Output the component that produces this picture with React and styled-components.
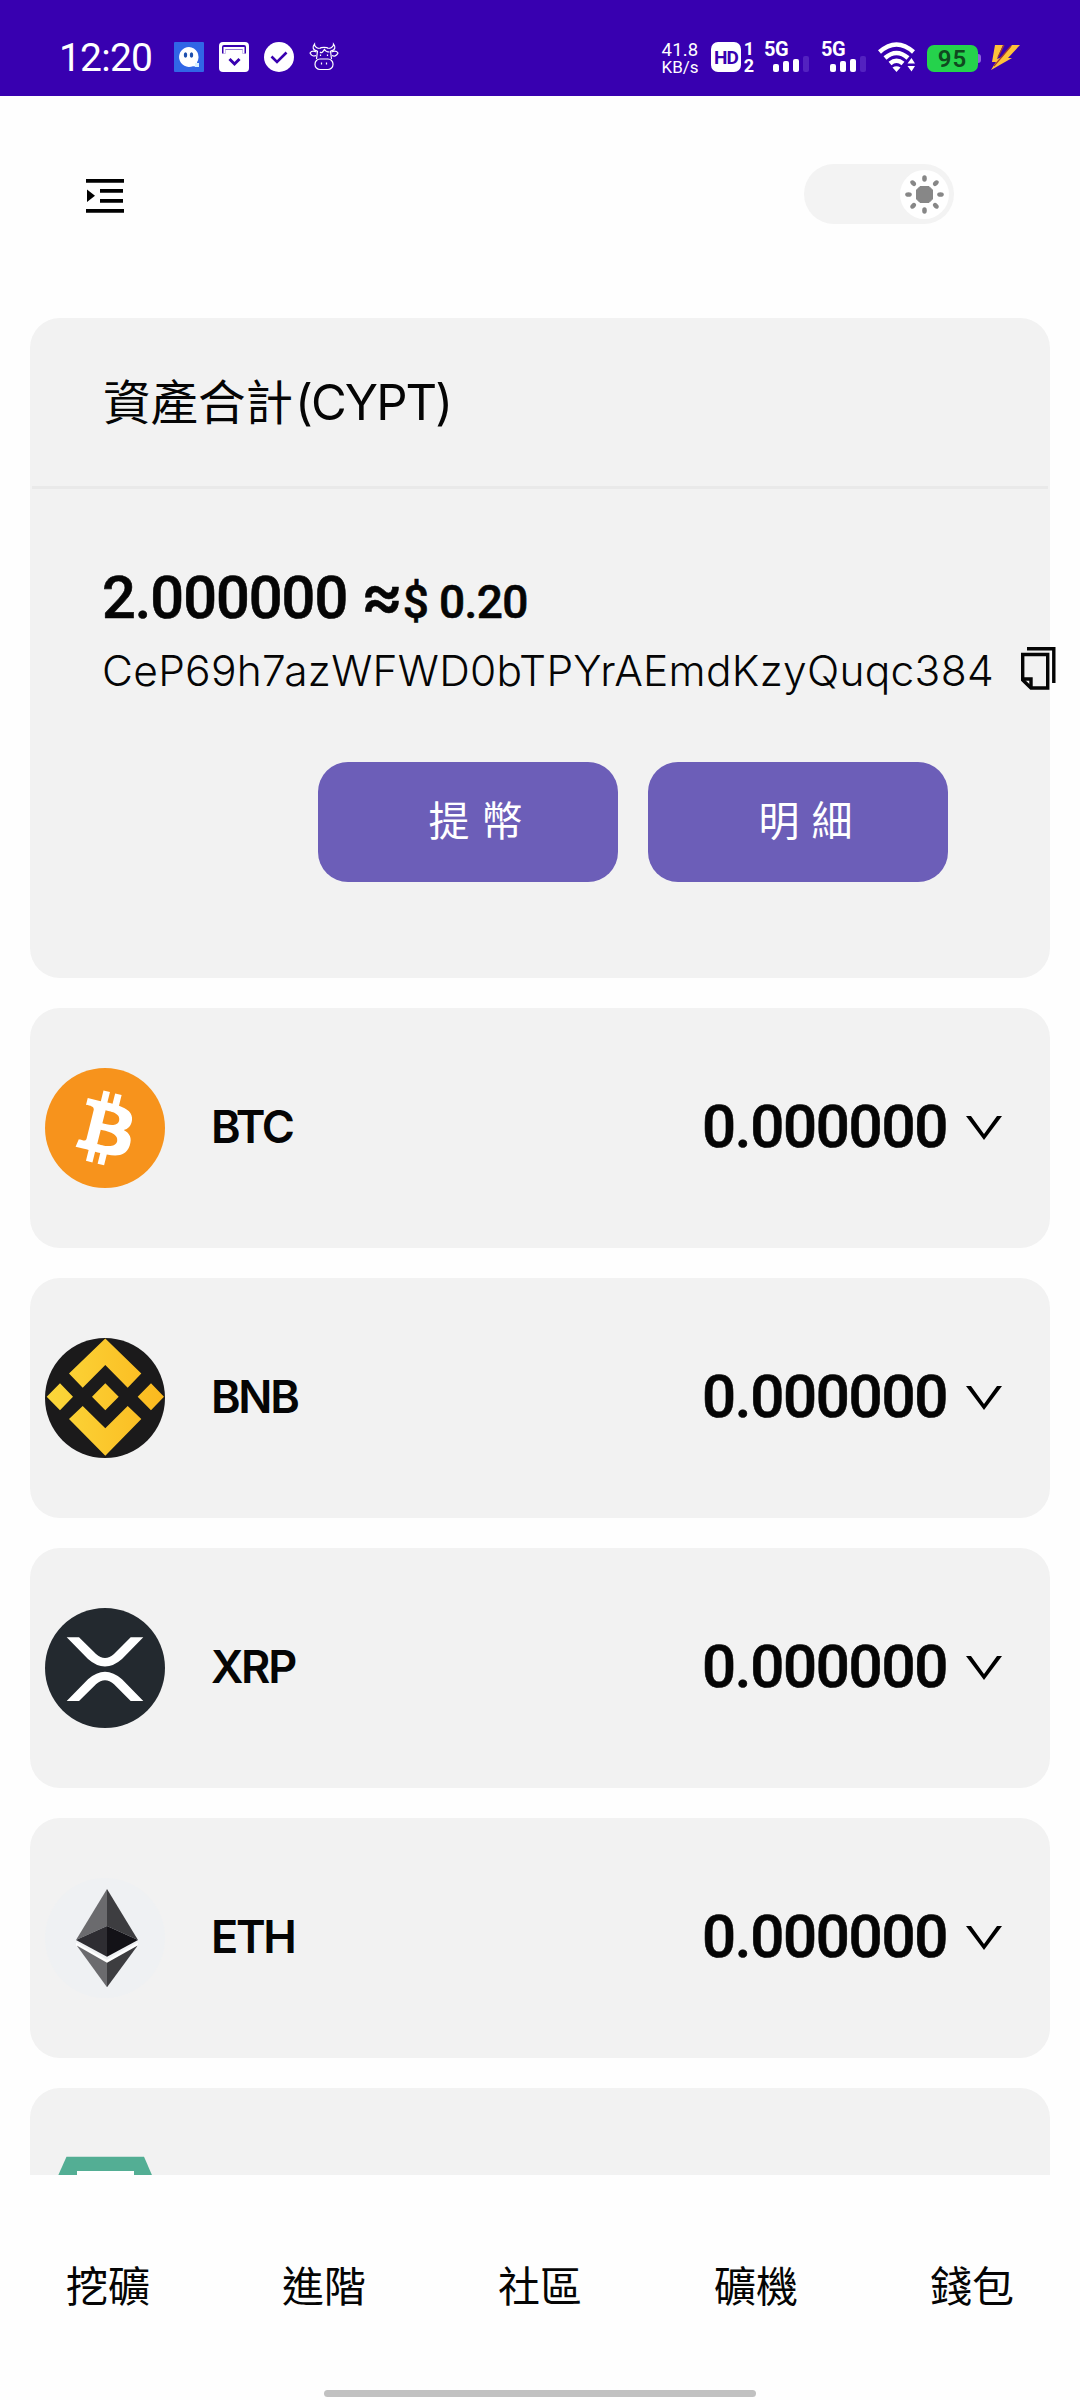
import React from 'react';
import styled, { createGlobalStyle } from 'styled-components';

const GlobalStyle = createGlobalStyle`
  * {
    box-sizing: border-box;
  }

  body {
    margin: 0;
    background: #fefefe;
    color: #050505;
    font-family: Inter, 'Noto Sans CJK TC', sans-serif;
  }

  svg {
    display: block;
    flex: none;
  }
`;

const Screen = styled.div`
  display: flex;
  flex-direction: column;
  width: 1080px;
  height: 2400px;
  overflow: hidden;
`;

/* status bar */

const StatusBar = styled.header`
  display: flex;
  justify-content: space-between;
  flex: none;
  height: 96px;
  padding: 42px 59px 0 59px;
  background: #3800b0;
  color: #fff;
`;

const StatusGroup = styled.div`
  display: flex;
  gap: ${(props) => props.$gap || 0}px;
  height: 30px;
`;

const Clock = styled.span`
  width: 100px;
  font: 450 39px/32px Roboto, sans-serif;
  letter-spacing: -0.8px;
  white-space: nowrap;
`;

const NetSpeed = styled.div`
  width: 38px;
  margin-right: 12px;
  font: 450 17px/17px Roboto, sans-serif;
  text-align: center;
  white-space: nowrap;

  span {
    display: block;
  }

  span:first-child {
    font-size: 18.5px;
    letter-spacing: 0.2px;
  }
`;

const HdBadge = styled.span`
  width: 30px;
  height: 30px;
  border-radius: 7px;
  background: #fff;
  color: #3800b0;
  font: 700 19px/31px Roboto, sans-serif;
  letter-spacing: -0.8px;
  text-align: center;
`;

const SimNumbers = styled.div`
  width: 14px;
  height: 34px;
  margin: -2px 8px 0 1px;
  font: 700 18px/17px Roboto, sans-serif;
  text-align: center;

  span {
    display: block;
  }
`;

const Signal = styled.div`
  display: flex;
  flex-direction: column;
  width: 57px;
  font: 700 20px/15px Roboto, sans-serif;
  letter-spacing: -0.5px;
`;

const Bars = styled.div`
  display: flex;
  align-items: flex-end;
  gap: 4px;
  height: 16px;
  margin: -1px 0 0 9px;
`;

const Bar = styled.i`
  width: 6px;
  height: ${(props) => props.$height}px;
  border-radius: 2px;
  background: ${(props) => (props.$dim ? '#5322c0' : '#fff')};
`;

const Battery = styled.div`
  display: flex;
  align-items: center;
  margin: 3px 9px 0 12px;
  height: 27px;

  &::after {
    content: '';
    width: 3px;
    height: 9px;
    border-radius: 0 3px 3px 0;
    background: #8d63dc;
  }
`;

const BatteryLevel = styled.span`
  width: 51px;
  height: 27px;
  border-radius: 7px;
  background: #25d24c;
  color: #10491f;
  font: 600 24px/28px Roboto, sans-serif;
  letter-spacing: 1px;
  text-align: center;
`;

/* top bar */

const TopBar = styled.div`
  display: flex;
  flex: none;
  justify-content: space-between;
  align-items: flex-start;
  height: 222px;
  padding: 68px 126px 0 86px;
`;

const MenuButton = styled.button`
  margin-top: 15px;
  padding: 0;
  border: 0;
  background: none;
`;

const Toggle = styled.div`
  display: flex;
  justify-content: flex-end;
  width: 150px;
  height: 60px;
  padding: 6px 5px;
  border-radius: 30px;
  background: #f3f3f3;
`;

const Knob = styled.div`
  width: 49px;
  height: 49px;
  border-radius: 50%;
  background: #fff;
`;

/* content */

const Content = styled.main`
  display: flex;
  flex: 1;
  flex-direction: column;
  gap: 30px;
  min-height: 0;
  padding: 0 30px;
  overflow: hidden;
`;

const Card = styled.section`
  flex: none;
  border-radius: 30px;
  background: #f2f2f2;
`;

const AssetCard = styled(Card)`
  height: 660px;
`;

const AssetTitle = styled.h1`
  height: 171px;
  margin: 0 2px;
  padding: 52px 0 0 71px;
  border-bottom: 3px solid #e9e9e9;
  font: 400 47.5px/60px 'Noto Sans CJK TC', sans-serif;

  span {
    margin-left: 2px;
    font-family: Inter, sans-serif;
    font-size: 49px;
    line-height: 1;
    letter-spacing: -1.9px;
  }
`;

const Balance = styled.div`
  display: flex;
  align-items: baseline;
  height: 80px;
  margin-top: 69px;
  padding-left: 72px;
  font: 500 59.5px/80px Roboto, sans-serif;
  letter-spacing: -1px;
  white-space: pre;
  -webkit-text-stroke: 0.6px #050505;
`;

const Approx = styled.span`
  margin-left: 13px;
  font: 500 65px/60px Inter, sans-serif;
  letter-spacing: -1px;
`;

const Fiat = styled.span`
  font-size: 46px;
  letter-spacing: -0.6px;
`;

const AddressRow = styled.div`
  display: flex;
  align-items: center;
  height: 60px;
  padding-left: 72px;
  white-space: nowrap;
`;

const Address = styled.span`
  width: 919px;
  flex: none;
  margin-top: 6px;
  font: 350 42.5px/60px Inter, sans-serif;
  letter-spacing: 0.28px;
`;

const Actions = styled.div`
  display: flex;
  justify-content: flex-end;
  gap: 30px;
  margin-top: 64px;
  padding-right: 102px;
`;

const ActionButton = styled.button`
  width: 300px;
  height: 120px;
  padding: 0 0 8px 15px;
  border: 0;
  border-radius: 30px;
  background: #6c5eb8;
  color: #fff;
  font: 400 41px/60px 'Noto Sans CJK TC', sans-serif;
  word-spacing: 3px;
`;

const CoinCard = styled(Card)`
  display: flex;
  align-items: center;
  height: 240px;
  padding: 0 48px 0 15px;
`;

const CoinName = styled.span`
  flex: 1;
  margin: -2px 0 0 46px;
  font: 600 45px/60px Inter, sans-serif;
  letter-spacing: -2.3px;
`;

const CoinAmount = styled.span`
  margin: -2px 19px 0 0;
  font: 500 60px/80px Roboto, sans-serif;
  letter-spacing: -1.3px;
  -webkit-text-stroke: 0.6px #050505;
`;

/* bottom navigation */

const BottomNav = styled.nav`
  display: flex;
  flex: none;
  flex-direction: column;
  align-items: center;
  justify-content: space-between;
  height: 225px;
  padding: 79px 0 3px;
`;

const NavItems = styled.div`
  display: grid;
  grid-template-columns: repeat(5, 1fr);
  width: 100%;
`;

const NavItem = styled.a`
  font: 400 42px/60px 'Noto Sans CJK TC', sans-serif;
  text-align: center;
`;

const HomeHandle = styled.div`
  width: 432px;
  height: 7px;
  border-radius: 4px;
  background: #c1c1c1;
`;

/* icons */

const ChatIcon = () => (
  <svg width="30" height="30" viewBox="0 0 30 30">
    <rect width="30" height="30" rx="1" fill="#3166e6" />
    <path d="M15 5a10 10 0 1 0 4 19.2l5 .6-1-4.500A10 10 0 0 0 15 5z" fill="#fff" />
    <path d="M21 21h4v4h-4z" fill="#d9f1ff" />
    <ellipse cx="11.500" cy="13" rx="1.700" ry="2.800" fill="#1d4fae" />
    <ellipse cx="17.500" cy="13" rx="1.700" ry="2.800" fill="#1d4fae" />
  </svg>
);

const InboxIcon = () => (
  <svg width="30" height="30" viewBox="0 0 30 30">
    <rect width="30" height="30" rx="4" fill="#fff" />
    <path d="M3 11.500V5a2 2 0 0 1 2-2h20a2 2 0 0 1 2 2v6.500h-3.500V7.500h-17v4z" fill="#3800b0" />
    <path d="M5.500 11.500V6h19v5.500" fill="none" stroke="#fff" strokeWidth="2" />
    <path d="M10.500 17l5 5 5-5" fill="none" stroke="#3800b0" strokeWidth="3" />
  </svg>
);

const CheckIcon = () => (
  <svg width="30" height="30" viewBox="0 0 30 30">
    <circle cx="15" cy="15" r="15" fill="#fff" />
    <path d="M7.500 14.500l5.500 5.500L22.500 10.500" fill="none" stroke="#3800b0" strokeWidth="2.600" />
  </svg>
);

const CowIcon = () => (
  <svg width="30" height="30" viewBox="0 0 30 30" fill="none" stroke="#fff" strokeWidth="1.200">
    <path d="M8.500 9C3 8 3.500 4.500 5.500 2c0 3 2 4 5 4.500M21.500 9c5.500-1 5-4.500 3-7 0 3-2 4-5 4.500" />
    <path d="M7.500 10C4 8.500 2 9.500 1 11c1.500 3 4 3.500 6 2.500M22.500 10c3.500-1.500 5.500-.5 6.500 1-1.500 3-4 3.500-6 2.500" />
    <path d="M10.500 6.500C12 5 18 5 19.500 6.500M8.500 9l-1 8M21.500 9l1 8M11 10c2 2 3-1 4.500-2.500 1 2 3 2.500 5 2.500" />
    <rect x="6" y="17" width="18" height="10.500" rx="5" />
    <path d="M12.500 20.500v2M17.500 20.500v2M11.500 12.500v1.500M18.500 12.500v1.500" />
  </svg>
);

const WifiIcon = () => (
  <svg width="37" height="30" viewBox="0 0 37 30" fill="none" stroke="#fff">
    <path d="M1.500 10Q18.500-5 35.500 10" strokeWidth="4.500" />
    <path d="M7 16Q18.500 6 30 16" strokeWidth="4.500" />
    <path d="M12 21.500Q18.500 16 25 21.500" strokeWidth="4.500" />
    <path d="M14.500 25.500q4-2.500 8 0l-4 4.500z" fill="#fff" stroke="none" />
    <path d="M29.500 21.500l4-5.500 3.500 5.500zM29.500 24l4 5.500 3.500-5.500z" fill="#fff" stroke="none" />
  </svg>
);

const ChargeIcon = () => (
  <svg width="31" height="30" viewBox="0 0 31 30">
    <path d="M5 3h8L7 17l5-2L22 3h8L18 16h4L1 28l5-8H2z" fill="#ffc239" />
    <path d="M14 3L8 15M21 4L4 24" stroke="#a33a32" strokeWidth="1.200" />
  </svg>
);

const MenuIcon = () => (
  <svg width="38" height="34" viewBox="0 0 38 34">
    <path d="M0 0h38v3.700H0zM14 10h23v3.700H14zM14 20h23v3.700H14zM0 30h38v3.700H0zM1 10.500v12.500l8-6.200z" />
  </svg>
);

const SunIcon = () => (
  <svg width="49" height="49" viewBox="-24.5 -24.5 49 49" fill="#878787">
    <path d="M-4.500-8h9l3.500 3.500v9l-3.500 3.500h-9l-3.500-3.500v-9z" stroke="#878787" strokeLinejoin="round" />
    {[0, 45, 90, 135, 180, 225, 270, 315].map((angle) => (
      <ellipse key={angle} cy="-16" rx="2.300" ry="3.300" transform={`rotate(${angle})`} />
    ))}
  </svg>
);

const CopyIcon = () => (
  <svg width="35" height="43" viewBox="0 0 35 43" fill="none" stroke="#050505" strokeWidth="3.400">
    <path d="M6 1.700h26.800V36" />
    <path d="M1.700 7.500h25v33.500H10L1.700 33z" />
    <path d="M1.700 32h8.300v9" />
  </svg>
);

const ChevronIcon = () => (
  <svg width="36" height="24" viewBox="0 0 36 24">
    <path d="M0 0h5L18 18 31 0H36L18 24z" />
  </svg>
);

const BtcLogo = () => (
  <svg width="120" height="120" viewBox="0 0 32 32">
    <circle cx="16" cy="16" r="16" fill="#f7931c" />
    <path
      fill="#fff"
      fillRule="evenodd"
      d="M23.189 14.020c.314-2.096-1.283-3.223-3.465-3.975l.708-2.840-1.728-.430-.690 2.765c-.454-.114-.920-.220-1.385-.326l.695-2.783L15.596 6l-.708 2.839c-.376-.086-.746-.170-1.104-.260l.002-.009-2.384-.595-.460 1.846s1.283.294 1.256.312c.700.175.826.638.805 1.006l-.806 3.235c.048.012.110.030.180.057l-.183-.045-1.130 4.532c-.086.212-.303.531-.793.410.018.025-1.256-.313-1.256-.313l-.858 1.978 2.250.561c.418.105.828.215 1.231.318l-.715 2.872 1.727.430.708-2.840c.472.127.930.245 1.378.357l-.706 2.828 1.728.430.715-2.866c2.948.558 5.164.333 6.097-2.333.752-2.146-.037-3.385-1.588-4.192 1.130-.260 1.980-1.003 2.207-2.538zm-3.950 5.538c-.533 2.147-4.148.986-5.320.695l.950-3.805c1.172.293 4.929.872 4.370 3.110zm.535-5.569c-.487 1.953-3.495.960-4.470.717l.860-3.450c.975.243 4.118.696 3.610 2.733z"
    />
  </svg>
);

const BnbLogo = () => (
  <svg width="120" height="120" viewBox="0 0 120 120">
    <defs>
      <linearGradient id="bnbGold" x1="0" y1="0" x2="1" y2="0">
        <stop offset="0" stopColor="#fbd73a" />
        <stop offset="1" stopColor="#fbb91f" />
      </linearGradient>
    </defs>
    <circle cx="60" cy="60" r="60" fill="#1b1a1b" />
    <path
      fill="url(#bnbGold)"
      d="M60.300.500l36 35-13.600 14.200L60.300 27 37.700 49.700 24 35.500zM60.300 45.300l13.400 13.400-13.400 13.600L47 58.700zM15 45.300l13 13.400-13 13.600L1.700 58.700zM106 45.300l13 13.400-13 13.600-13.300-13.600zM37.700 68l22.600 22.300L82.700 68l13.600 13-36 36.700L24 81z"
    />
  </svg>
);

const XrpLogo = () => (
  <svg width="120" height="120" viewBox="0 0 120 120">
    <circle cx="60" cy="60" r="60" fill="#23292f" />
    <path
      fill="#fff"
      d="M21.700 29.300H34L51 46Q60 54 69 46L85.700 29.300H98.300L77 51Q60 66 43 51ZM21.700 93H34L51 76.300Q60 68.300 69 76.300L85.700 93H98.300L77 71.300Q60 56.300 43 71.300Z"
    />
  </svg>
);

const EthLogo = () => (
  <svg width="120" height="120" viewBox="0 0 120 120">
    <circle cx="60" cy="60" r="60" fill="#eff1f3" />
    <path d="M31 64.500L62 82 93 64.500V68L62 86 31 68z" fill="#fff" />
    <path d="M62 11v37L31 62z" fill="#6b6b6e" />
    <path d="M62 11v37l31 14z" fill="#3d3d40" />
    <path d="M62 48v30.700L31 62z" fill="#2e2d32" />
    <path d="M62 48v30.700L93 62z" fill="#131217" />
    <path d="M31.700 67.500L62 84.700v24.600z" fill="#6b6b6e" />
    <path d="M92.700 67.500L62 84.700v24.600z" fill="#3d3d40" />
  </svg>
);

const UsdtLogo = () => (
  <svg width="120" height="120" viewBox="0 0 120 120">
    <path d="M21.500 8.700H99L120 57 60 112 0 57z" fill="#53ae94" />
    <path d="M32 23h57v14H68v10c18 1 30 4 30 8s-12 7-30 8v30H53V63c-18-1-30-4-30-8s12-7 30-8V37H32z" fill="#fff" />
  </svg>
);

const coins = [
  { name: 'BTC', amount: '0.000000', Logo: BtcLogo },
  { name: 'BNB', amount: '0.000000', Logo: BnbLogo },
  { name: 'XRP', amount: '0.000000', Logo: XrpLogo },
  { name: 'ETH', amount: '0.000000', Logo: EthLogo },
];

const tabs = ['挖礦', '進階', '社區', '礦機', '錢包'];

function SignalStrength() {
  return (
    <Signal>
      5G
      <Bars>
        <Bar $height={8} />
        <Bar $height={11} />
        <Bar $height={13} />
        <Bar $height={16} $dim />
      </Bars>
    </Signal>
  );
}

function CoinRow({ coin }) {
  const { name, amount, Logo } = coin;

  return (
    <CoinCard>
      <Logo />
      <CoinName>{name}</CoinName>
      <CoinAmount>{amount}</CoinAmount>
      <ChevronIcon />
    </CoinCard>
  );
}

function App() {
  return (
    <Screen>
      <GlobalStyle />
      <StatusBar>
        <StatusGroup $gap={15}>
          <Clock>12:20</Clock>
          <ChatIcon />
          <InboxIcon />
          <CheckIcon />
          <CowIcon />
        </StatusGroup>
        <StatusGroup>
          <NetSpeed>
            <span>41.8</span>
            <span>KB/s</span>
          </NetSpeed>
          <HdBadge>HD</HdBadge>
          <SimNumbers>
            <span>1</span>
            <span>2</span>
          </SimNumbers>
          <SignalStrength />
          <SignalStrength />
          <WifiIcon />
          <Battery>
            <BatteryLevel>95</BatteryLevel>
          </Battery>
          <ChargeIcon />
        </StatusGroup>
      </StatusBar>

      <TopBar>
        <MenuButton type="button" aria-label="menu">
          <MenuIcon />
        </MenuButton>
        <Toggle>
          <Knob>
            <SunIcon />
          </Knob>
        </Toggle>
      </TopBar>

      <Content>
        <AssetCard>
          <AssetTitle>
            資產合計
            <span>(CYPT)</span>
          </AssetTitle>
          <Balance>
            2.000000
            <Approx>≈</Approx>
            <Fiat>$ 0.20</Fiat>
          </Balance>
          <AddressRow>
            <Address>CeP69h7azWFWD0bTPYrAEmdKzyQuqc384</Address>
            <CopyIcon />
          </AddressRow>
          <Actions>
            <ActionButton type="button">提 幣</ActionButton>
            <ActionButton type="button">明 細</ActionButton>
          </Actions>
        </AssetCard>

        {coins.map((coin) => (
          <CoinRow key={coin.name} coin={coin} />
        ))}
        <CoinCard>
          <UsdtLogo />
        </CoinCard>
      </Content>

      <BottomNav>
        <NavItems>
          {tabs.map((tab) => (
            <NavItem key={tab}>{tab}</NavItem>
          ))}
        </NavItems>
        <HomeHandle />
      </BottomNav>
    </Screen>
  );
}

export default App;
